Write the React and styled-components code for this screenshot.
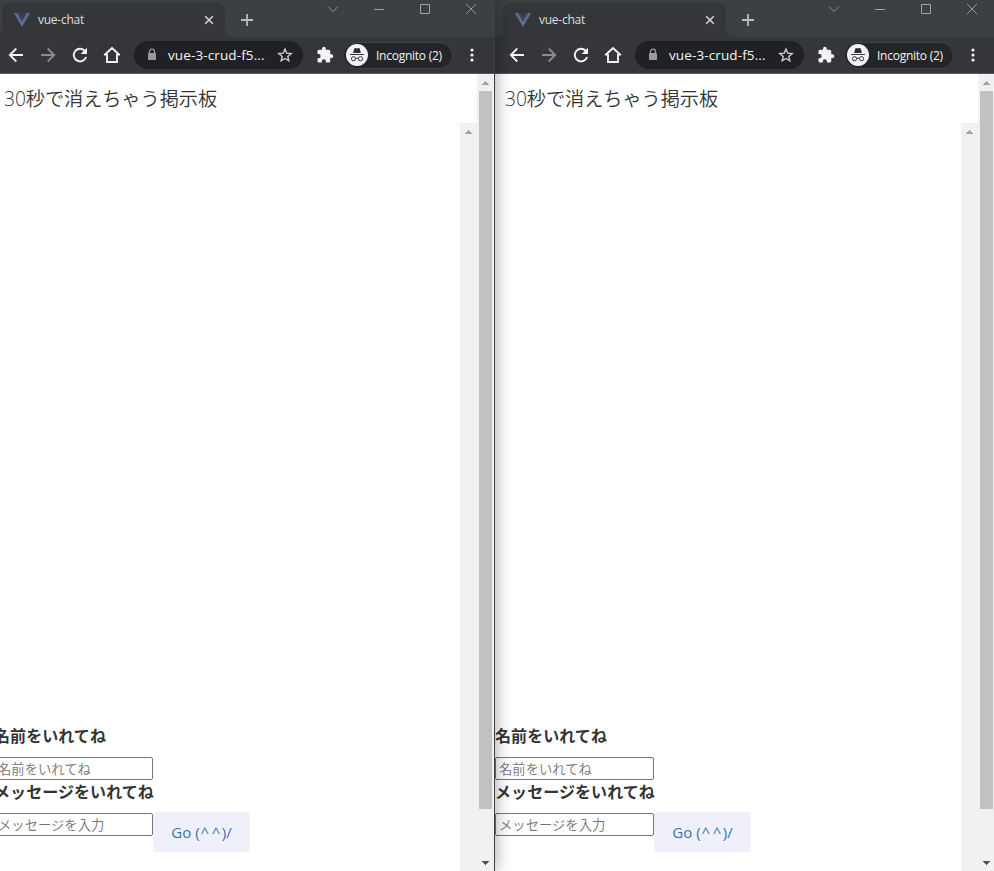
import React from "react";
import styled, { createGlobalStyle } from "styled-components";

const GlobalStyle = createGlobalStyle`
  * { box-sizing: border-box; }
  html, body { margin: 0; height: 871px; overflow: hidden; background: #fff; }
`;

const Desktop = styled.main`
  display: flex;
  width: 1002px;
  height: 871px;
  margin-left: -6px;
  font-family: "Open Sans", "Noto Sans CJK JP", sans-serif;
`;

const Window = styled.section`
  display: flex;
  flex-direction: column;
  flex: none;
  width: 501px;
  height: 871px;
  border-right: 1px solid #3f4042;
  box-shadow: 0 0 16px rgba(0, 0, 0, 0.38);
  z-index: ${(p) => (p.$front ? 2 : 1)};
  background: #fff;
`;

const TabStrip = styled.header`
  display: flex;
  align-items: flex-end;
  flex: none;
  height: 37px;
  background: #3c4043;
`;

const Flare = styled.svg`
  display: block;
  flex: none;
  width: 8px;
  height: 8px;
`;

const Tab = styled.div`
  display: flex;
  align-items: center;
  width: 223px;
  height: 34px;
  padding: 0 10px 0 12px;
  border-radius: 8px 8px 0 0;
  background: #35363a;
  color: #dcdee1;
`;

const TabTitle = styled.span`
  flex: 1;
  margin-left: 8px;
  font-size: 12px;
  line-height: 16px;
  letter-spacing: -0.25px;
`;

const Icon = styled.svg`
  display: block;
  flex: none;
  width: ${(p) => p.$w}px;
  height: ${(p) => p.$h || p.$w}px;
`;

const NewTab = styled.div`
  align-self: flex-start;
  margin: 14px 0 0 8px;
`;

const Controls = styled.div`
  display: flex;
  align-self: flex-start;
  gap: 34px;
  margin: 3px 17px 0 auto;
`;

const Toolbar = styled.nav`
  display: flex;
  align-items: center;
  flex: none;
  height: 37px;
  padding: 0 0 0 13px;
  border-bottom: 1px solid #56585b;
  background: #35363a;
`;

const NavIcons = styled.div`
  display: flex;
  gap: 14px;
`;

const AddressBar = styled.div`
  display: flex;
  align-items: center;
  width: 169px;
  height: 28px;
  margin-left: 13px;
  padding: 0 10px 0 13px;
  border-radius: 14px;
  background: #202124;
`;

const Url = styled.span`
  flex: 1;
  margin-left: 11px;
  color: #f4f5f6;
  font-size: 13.5px;
  font-weight: 500;
  line-height: 18px;
  letter-spacing: 0.12px;
  white-space: nowrap;
`;

const Extensions = styled.div`
  margin: 0 10px 0 13px;
`;

const Profile = styled.div`
  display: flex;
  align-items: center;
  width: 109px;
  height: 27px;
  padding-left: 2px;
  border: 1px solid #414246;
  border-left-width: 0;
  border-radius: 14px;
  background: #242528;
  color: #f1f3f4;
  font-size: 12px;
  font-weight: 500;
  letter-spacing: -0.25px;
  white-space: nowrap;
`;

const ProfileName = styled.span`
  margin-left: 8px;
`;

const More = styled.div`
  margin-left: 17px;
`;

const Viewport = styled.div`
  display: flex;
  flex: 1;
  min-height: 0;
`;

const Page = styled.div`
  display: flex;
  flex-direction: column;
  flex: 1;
  min-width: 0;
`;

const Heading = styled.h1`
  flex: none;
  height: 49px;
  margin: 0;
  padding: 11px 0 0 10px;
  color: #333;
  font-size: 19.2px;
  font-weight: 350;
  line-height: 28px;
  letter-spacing: -0.06px;
  white-space: nowrap;
`;

const Board = styled.div`
  display: flex;
  flex: 1;
  min-height: 0;
`;

const Form = styled.form`
  display: flex;
  flex: 1;
  flex-direction: column;
  justify-content: flex-end;
  padding-bottom: 19px;
`;

const Label = styled.label`
  height: 24px;
  margin-bottom: ${(p) => p.$gap}px;
  color: #333;
  font-size: 16px;
  font-weight: 700;
  line-height: 24px;
  letter-spacing: 0.07px;
`;

const Field = styled.input`
  display: block;
  flex: none;
  width: 159px;
  height: 23px;
  margin: ${(p) => p.$top || 0}px 0 0;
  padding: 1px 2px 1px 3px;
  border: 1px solid #767676;
  border-radius: 2px;
  background: #fff;
  font-family: "Noto Sans CJK JP", sans-serif;
  font-size: 13.333px;
  font-weight: 350;
  outline: 0;
  &::placeholder { color: #757575; opacity: 1; }
`;

const SendRow = styled.div`
  display: flex;
`;

const SendButton = styled.button`
  width: 97px;
  height: 40px;
  padding: 0;
  border: 0;
  border-radius: 4px;
  background: #f0f0fa;
  color: #3674ab;
  font-family: "Open Sans", sans-serif;
  font-size: 15px;
  font-weight: 400;
  white-space: pre;
`;

const Carets = styled.span`
  margin: 0 -1px 0 1px;
  letter-spacing: 2.5px;
`;

const Scrollbar = styled.div`
  display: flex;
  flex-direction: column;
  flex: none;
  align-items: center;
  width: 17px;
  background: #f1f1f1;
`;

const ArrowCell = styled.div`
  display: grid;
  flex: none;
  width: 17px;
  height: 17px;
  margin-top: ${(p) => (p.$end ? "auto" : 0)};
  place-items: center;
`;

const Thumb = styled.div`
  width: 13px;
  height: 718px;
  background: #c1c1c1;
`;

function Arrow({ down }) {
  return (
    <ArrowCell $end={down}>
      <Icon $w={7} $h={4} viewBox="0 0 7 4" shapeRendering="crispEdges">
        <path d={down ? "M0 0h7v1H6v1H5v1H4v1H3V3H2V2H1V1H0z" : "M3 0h1v1h1v1h1v1h1v1H0V3h1V2h1V1h1z"} fill={down ? "#505050" : "#a3a3a3"} />
      </Icon>
    </ArrowCell>
  );
}

function VueLogo() {
  return (
    <Icon $w={16} $h={14} viewBox="0 0 16 14">
      <path d="M0 0h3.2L8 8.3 12.8 0H16L8 14z" fill="#5d6f91" />
      <path d="M3.2 0h3L8 3.1 9.8 0h3L8 8.3z" fill="#3c4257" />
    </Icon>
  );
}

function WindowControls() {
  return (
    <Controls>
      <Icon $w={12} viewBox="0 0 12 12"><path d="M1 3.5l5 5 5-5" fill="none" stroke="#8e9092" /></Icon>
      <Icon $w={12} viewBox="0 0 12 12"><path d="M1 6.5h10" stroke="#a1a3a5" /></Icon>
      <Icon $w={12} viewBox="0 0 12 12"><path d="M1.5 1.5h9v9h-9z" fill="none" stroke="#a1a3a5" /></Icon>
      <Icon $w={12} viewBox="0 0 12 12"><path d="M1 1l10 10M11 1L1 11" stroke="#a1a3a5" strokeWidth=".9" /></Icon>
    </Controls>
  );
}

function IncognitoBadge() {
  return (
    <Icon $w={22} viewBox="0 0 22 22">
      <circle cx="11" cy="11" r="11" fill="#f1f3f4" />
      <path d="M7.1 9L8.3 4.6q.3-.8 1.1-.6l1.6.4 1.6-.4q.8-.2 1.1.6L14.9 9z" fill="#2d2e35" />
      <path d="M4 10.5h14" stroke="#35363a" />
      <g fill="none" stroke="#35363a">
        <circle cx="7.5" cy="14.7" r="2.1" />
        <circle cx="14.5" cy="14.7" r="2.1" />
        <path d="M9.6 14.5q1.4-.8 2.8 0" />
      </g>
    </Icon>
  );
}

function BrowserWindow({ front }) {
  return (
    <Window $front={front}>
      <TabStrip>
        <Flare viewBox="0 0 8 8"><path d="M8 0v8H0q8 0 8-8z" fill="#35363a" /></Flare>
        <Tab>
          <VueLogo />
          <TabTitle>vue-chat</TabTitle>
          <Icon $w={12} viewBox="0 0 12 12"><path d="M2.2 2.2l7.6 7.6M9.8 2.2L2.2 9.8" stroke="#d5d7da" strokeWidth="1.5" /></Icon>
        </Tab>
        <Flare viewBox="0 0 8 8"><path d="M0 0v8h8q-8 0-8-8z" fill="#35363a" /></Flare>
        <NewTab>
          <Icon $w={12} viewBox="0 0 12 12"><path d="M0 6h12M6 0v12" stroke="#b9bbbd" strokeWidth="1.8" /></Icon>
        </NewTab>
        <WindowControls />
      </TabStrip>
      <Toolbar>
        <NavIcons>
          <Icon $w={18} viewBox="0 0 18 18"><path d="M16 9H3M9.3 2.5L2.8 9l6.5 6.5" fill="none" stroke="#f1f3f4" strokeWidth="1.8" /></Icon>
          <Icon $w={18} viewBox="0 0 18 18"><path d="M2 9h13M8.7 2.5L15.2 9l-6.5 6.5" fill="none" stroke="#898b8e" strokeWidth="1.8" /></Icon>
          <Icon $w={18} viewBox="0 0 18 18">
            <path d="M13.6 4.6A6.3 6.3 0 1 0 15.1 11" fill="none" stroke="#f1f3f4" strokeWidth="1.9" />
            <path d="M16 1.7v6.4H9.6z" fill="#f1f3f4" />
          </Icon>
          <Icon $w={18} viewBox="0 0 18 18"><path d="M1.2 9.3L9 2l7.8 7.3M4 8v8h10V8" fill="none" stroke="#f1f3f4" strokeWidth="1.9" /></Icon>
        </NavIcons>
        <AddressBar>
          <Icon $w={10} $h={14} viewBox="0 0 10 14">
            <path d="M2.5 5.5V3.7a2.5 2.5 0 0 1 5 0v1.8" fill="none" stroke="#999a9d" strokeWidth="1.3" />
            <rect x="1" y="5" width="8" height="7" rx="1" fill="#999a9d" />
          </Icon>
          <Url>vue-3-crud-f5...</Url>
          <Icon $w={16} viewBox="0 0 16 16"><path d="M8 2l1.7 4.1 4.5.4-3.4 2.9 1 4.4L8 11.5l-3.8 2.3 1-4.4-3.4-2.9 4.5-.4z" fill="none" stroke="#cbcdd0" strokeWidth="1.4" /></Icon>
        </AddressBar>
        <Extensions>
          <Icon $w={18} viewBox="0 0 24 24"><path d="M20.5 11H19V7a2 2 0 0 0-2-2h-4V3.5a2.5 2.5 0 0 0-5 0V5H4a2 2 0 0 0-2 2v3.8h1.5a2.7 2.7 0 0 1 0 5.4H2V20c0 1.1.9 2 2 2h3.8v-1.5a2.7 2.7 0 0 1 5.4 0V22H17a2 2 0 0 0 2-2v-4h1.5a2.5 2.5 0 0 0 0-5z" fill="#f1f3f4" /></Icon>
        </Extensions>
        <Profile><IncognitoBadge /><ProfileName>Incognito (2)</ProfileName></Profile>
        <More>
          <Icon $w={4} $h={14} viewBox="0 0 4 14"><g fill="#f1f3f4"><circle cx="2" cy="2" r="1.6" /><circle cx="2" cy="7" r="1.6" /><circle cx="2" cy="12" r="1.6" /></g></Icon>
        </More>
      </Toolbar>
      <Viewport>
        <Page>
          <Heading>30秒で消えちゃう掲示板</Heading>
          <Board>
            <Form onSubmit={(e) => e.preventDefault()}>
              <Label $gap={9}>名前をいれてね</Label>
              <Field placeholder="名前をいれてね" />
              <Label $gap={8}>メッセージをいれてね</Label>
              <SendRow>
                <Field placeholder="メッセージを入力" $top={1} />
                <SendButton>Go (<Carets>^^</Carets>)/</SendButton>
              </SendRow>
            </Form>
            <Scrollbar><Arrow /></Scrollbar>
          </Board>
        </Page>
        <Scrollbar><Arrow /><Thumb /><Arrow down /></Scrollbar>
      </Viewport>
    </Window>
  );
}

export default function App() {
  return (
    <>
      <GlobalStyle />
      <Desktop>
        <BrowserWindow front />
        <BrowserWindow />
      </Desktop>
    </>
  );
}
